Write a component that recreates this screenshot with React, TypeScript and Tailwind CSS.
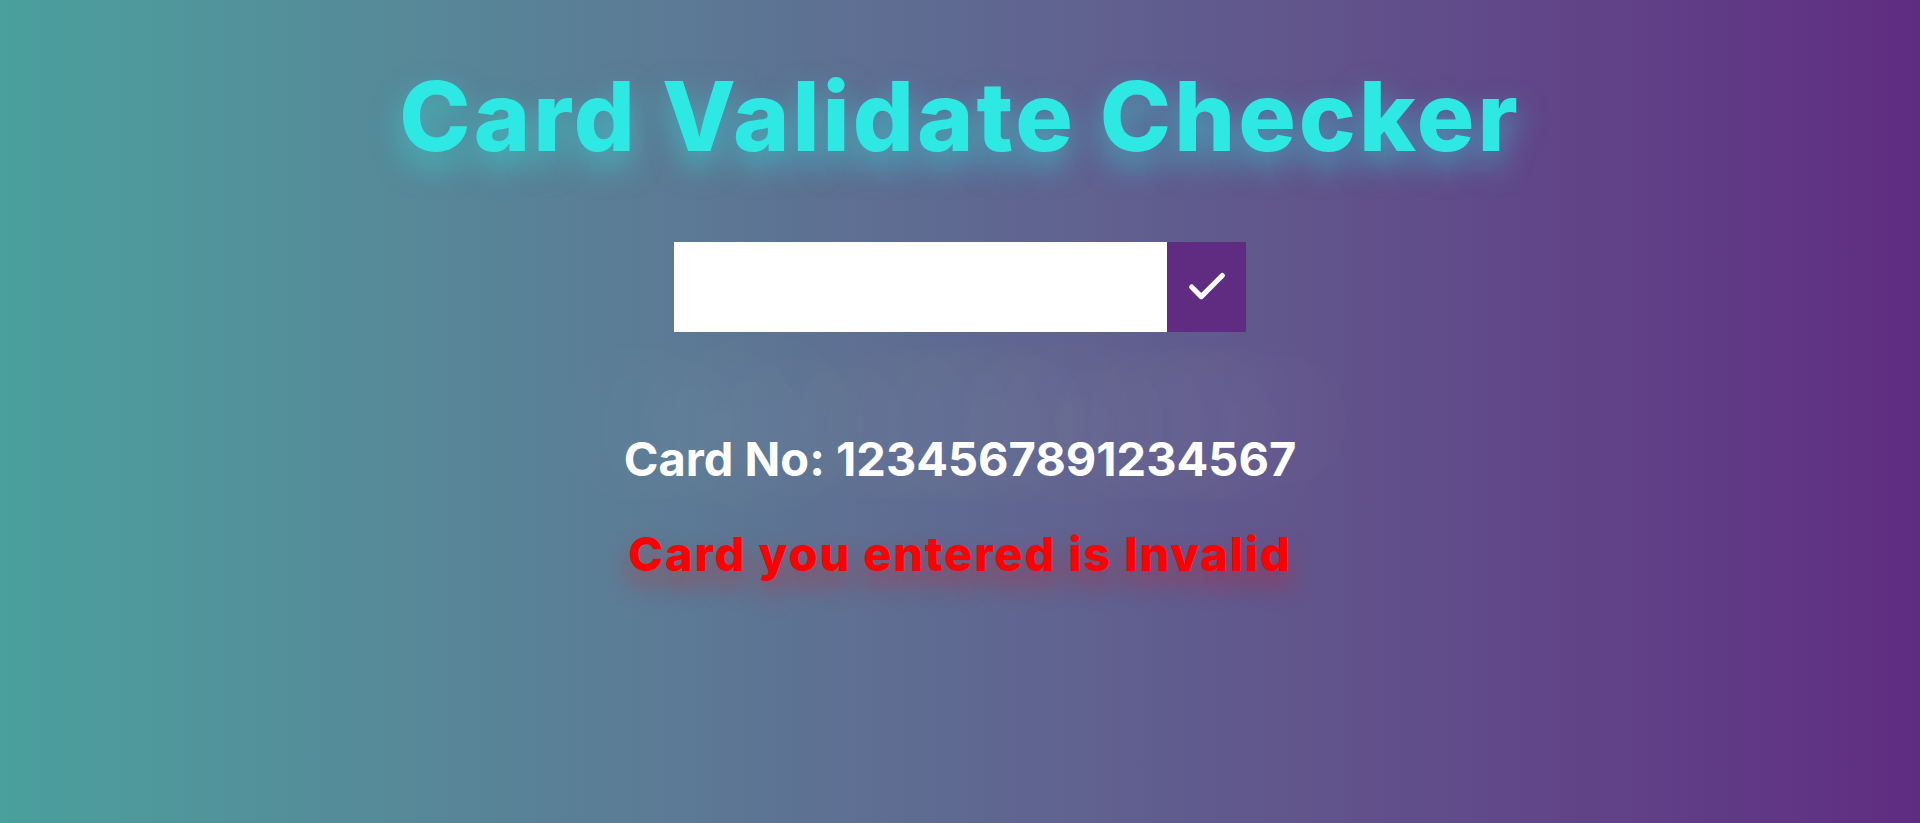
import { Check } from "lucide-react";

export default function App() {
  return (
    <div className="min-h-screen w-full bg-gradient-to-r from-[#49a09d] to-[#5f2c82] font-['Inter',sans-serif] flex flex-col items-center pt-[68px]">
      <h1 className="text-[96px] leading-none font-extrabold text-[#2ee8e3] tracking-[3px] [text-shadow:0_14px_30px_rgba(46,232,227,0.55)]">
        Card Validate Checker
      </h1>

      <form className="mt-[78px] flex h-[90px]" onSubmit={(e) => e.preventDefault()}>
        <input type="text" className="w-[493px] h-full bg-white outline-none px-4 text-2xl" />
        <button type="submit" className="w-[79px] h-full bg-[#5f2c82] flex items-center justify-center text-white">
          <Check size={46} strokeWidth={2.7} />
        </button>
      </form>

      <p className="mt-[103px] text-[47px] leading-none font-bold text-white [text-shadow:0_-35px_110px_rgba(255,255,255,0.5)]">
        Card No: 1234567891234567
      </p>
      <p className="mt-[48px] text-[47px] leading-none font-extrabold text-[#ff0000] tracking-[1.8px] [text-shadow:0_14px_26px_rgba(255,0,0,0.4)]">
        Card you entered is Invalid
      </p>
    </div>
  );
}
